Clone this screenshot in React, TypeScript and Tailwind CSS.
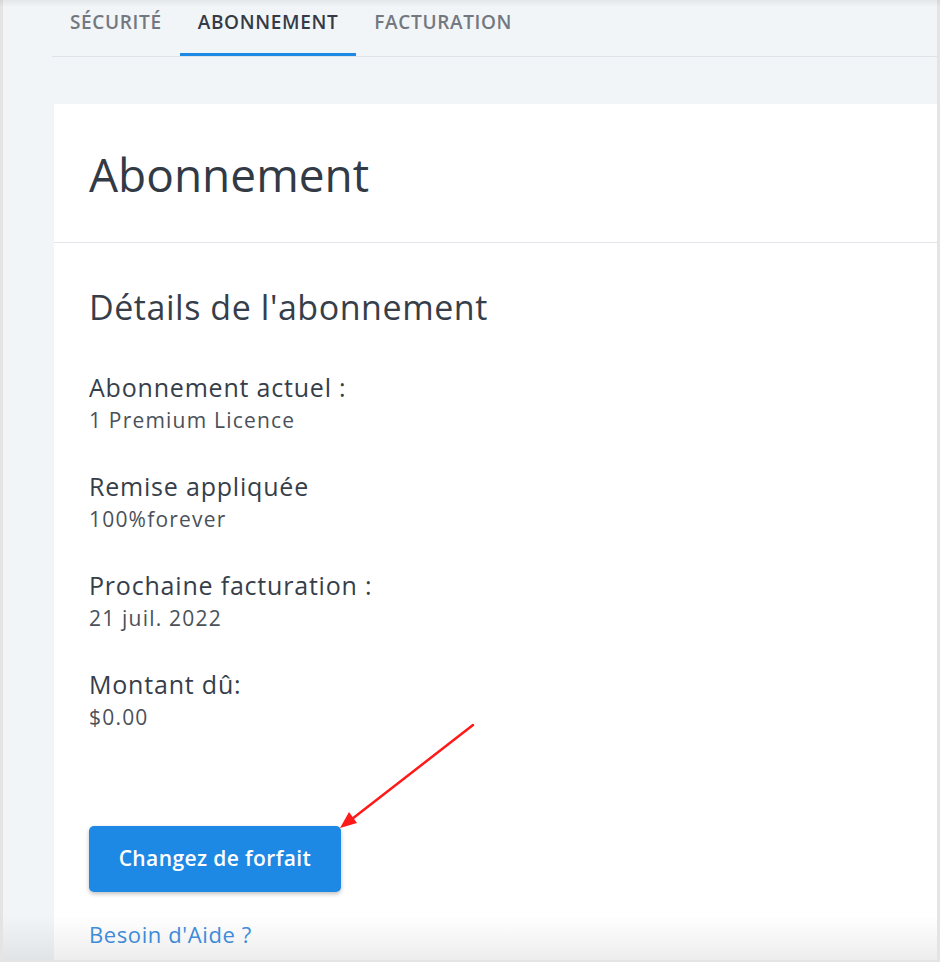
import React from "react";

const tabs = ["Sécurité", "Abonnement", "Facturation"];

const details = [
  { label: "Abonnement actuel :", value: "1 Premium Licence" },
  { label: "Remise appliquée", value: "100%forever" },
  { label: "Prochaine facturation :", value: "21 juil. 2022" },
  { label: "Montant dû:", value: "$0.00" },
];

export default function App() {
  return (
    <div
      className="relative w-[940px] h-[962px] overflow-hidden bg-[#e4e4e4]"
      style={{ fontFamily: '"Open Sans", "Noto Sans", sans-serif' }}
    >
      <div className="ml-[3px] mr-[3px] h-[960px] bg-[#f2f5f8] pl-[49px] overflow-hidden">
        {/* tabs */}
        <div className="flex h-[57px] border-b border-[#dfe4ea]">
          {tabs.map((t) => {
            const active = t === "Abonnement";
            return (
              <div
                key={t}
                className={`h-[56px] px-[18px] pt-[9px] text-[19px] leading-[26px] font-semibold uppercase tracking-[0.65px] ${
                  active ? "text-[#343b47] border-b-[3px] border-[#1e88e5]" : "text-[#737880]"
                }`}
              >
                {t}
              </div>
            );
          })}
        </div>

        {/* card */}
        <div className="mt-[47px] ml-[2px] bg-white h-[900px]">
          <div className="pl-[35px] pt-[40px] pb-[38px] border-b border-[#e1e4e8]">
            <h1 className="text-[46px] leading-[60px] text-[#323a46]">Abonnement</h1>
          </div>
          <div className="pl-[35px] pt-[44px]">
            <h2 className="text-[34px] leading-[40px] tracking-[0.55px] text-[#363e4a]">Détails de l'abonnement</h2>
            <div className="mt-[45px] flex flex-col gap-[38px]">
              {details.map((d) => (
                <div key={d.label}>
                  <div className="text-[25px] leading-[30px] tracking-[0.8px] text-[#363e4a]">{d.label}</div>
                  <div className="mt-[5px] text-[21px] leading-[26px] tracking-[1.2px] text-[#4a515a]">{d.value}</div>
                </div>
              ))}
            </div>
            <button className="mt-[96px] w-[252px] h-[66px] rounded-[5px] bg-[#1e88e5] text-white text-[21px] font-semibold tracking-[0.4px] shadow-[0_2px_4px_rgba(0,0,0,0.25)]">
              Changez de forfait
            </button>
            <div className="mt-[28px] text-[22px] leading-[28px] tracking-[0.6px] text-[#3f90e0]">Besoin d'Aide ?</div>
          </div>
        </div>
      </div>

      {/* top shadow */}
      <div className="absolute top-0 left-0 right-0 h-[7px] bg-gradient-to-b from-[rgba(0,0,0,0.06)] to-transparent" />
      {/* bottom fade */}
      <div className="absolute left-[3px] right-[3px] bottom-[2px] h-[45px] bg-gradient-to-b from-transparent to-[rgba(0,0,0,0.07)]" />

      {/* annotation arrow */}
      <svg className="absolute inset-0 pointer-events-none" width="940" height="962">
        <line x1="473" y1="725" x2="352" y2="819" stroke="#ff1a1a" strokeWidth="2.5" strokeLinecap="round" />
        <polygon points="340,828 357,823 349,812" fill="#ff1a1a" />
      </svg>
    </div>
  );
}
